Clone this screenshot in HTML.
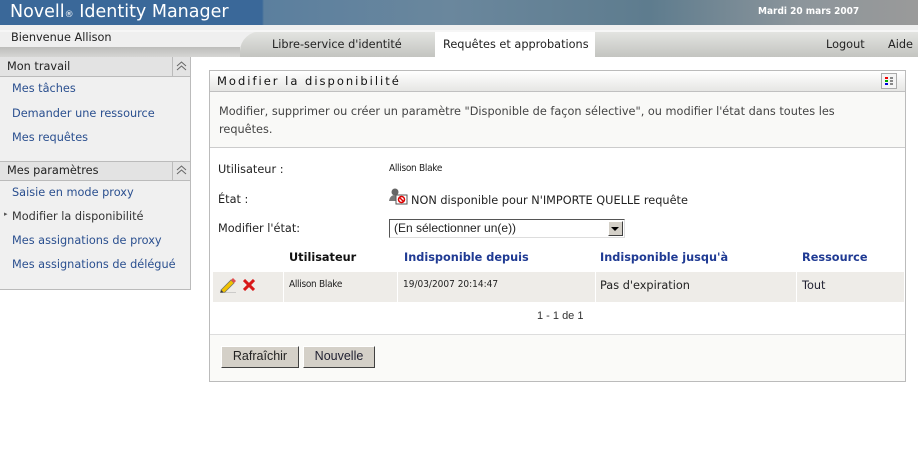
<!DOCTYPE html>
<html><head><meta charset="utf-8">
<style>
*{margin:0;padding:0;box-sizing:border-box}
body{width:918px;height:461px;background:#fff;font-family:"DejaVu Sans","Liberation Sans",sans-serif;font-size:11.3px;color:#222;position:relative;overflow:hidden}
.a{position:absolute;white-space:nowrap}
a{color:#2a4f8f;text-decoration:none}
.hd{color:#1f3a93;font-weight:bold;font-size:11.3px}
</style></head><body>
<div class="a" style="left:0;top:0;width:918px;height:25px;background:linear-gradient(90deg,#3a6899 0,#3a6899 262px,#5b7f9e 264px,#6a879d 450px,#5e7c8e 650px,#8c959b 800px,#9a9a9a 918px)"></div>
<div class="a" style="left:10px;top:2px;font-size:17.5px;color:#fff">Novell<span style="font-size:9px">®</span> Identity Manager</div>
<div class="a" style="left:758px;top:6px;font-size:10px;color:#fff;font-weight:bold;font-family:'DejaVu Sans Condensed','DejaVu Sans',sans-serif">Mardi 20 mars 2007</div>
<div class="a" style="left:0;top:25px;width:918px;height:32px;background:#efefef"></div>
<div class="a" style="left:0;top:47px;width:240px;height:10px;background:linear-gradient(#bdbdbb,#d6d6d4)"></div>
<div class="a" style="left:240px;top:31px;width:678px;height:26px;background:linear-gradient(#e4e5e2,#c3c4c0);border-top-left-radius:22px 20px"></div>
<div class="a" style="left:0;top:30px;width:918px;height:2px;background:#f6f6f6"></div>
<div class="a" style="left:11px;top:31px">Bienvenue Allison</div>
<div class="a" style="left:272px;top:38px">Libre-service d'identité</div>
<div class="a" style="left:435px;top:32px;width:160px;height:25px;background:#fff"></div>
<div class="a" style="left:443px;top:38px">Requêtes et approbations</div>
<div class="a" style="left:826px;top:38px">Logout</div>
<div class="a" style="left:888px;top:38px">Aide</div>
<div class="a" style="left:0;top:57px;width:191px;height:233px;background:#f0f0f0;border:1px solid #bbb;border-left:none"></div>
<div class="a" style="left:0;top:57px;width:190px;height:20px;background:#e3e3e3;border-bottom:1px solid #bbb"></div>
<div class="a" style="left:172px;top:57px;width:1px;height:20px;background:#bbb"></div>
<svg class="a" style="left:176px;top:61px" width="11" height="11" viewBox="0 0 11 11"><path d="M1 5L5.5 1L10 5M1 9L5.5 5L10 9" fill="none" stroke="#666"/></svg>
<div class="a" style="left:7px;top:60px">Mon travail</div>
<div class="a" style="left:12px;top:82px"><a>Mes tâches</a></div>
<div class="a" style="left:12px;top:107px"><a>Demander une ressource</a></div>
<div class="a" style="left:12px;top:131px"><a>Mes requêtes</a></div>
<div class="a" style="left:0;top:161px;width:190px;height:20px;background:#e3e3e3;border-top:1px solid #bbb;border-bottom:1px solid #bbb"></div>
<div class="a" style="left:172px;top:161px;width:1px;height:20px;background:#bbb"></div>
<svg class="a" style="left:176px;top:165px" width="11" height="11" viewBox="0 0 11 11"><path d="M1 5L5.5 1L10 5M1 9L5.5 5L10 9" fill="none" stroke="#666"/></svg>
<div class="a" style="left:7px;top:164px">Mes paramètres</div>
<div class="a" style="left:12px;top:186px"><a>Saisie en mode proxy</a></div>
<div class="a" style="left:4px;top:210px;font-size:7px;color:#555">▸</div>
<div class="a" style="left:12px;top:210px;color:#333">Modifier la disponibilité</div>
<div class="a" style="left:12px;top:234px"><a>Mes assignations de proxy</a></div>
<div class="a" style="left:12px;top:258px"><a>Mes assignations de délégué</a></div>
<div class="a" style="left:209px;top:70px;width:697px;height:312px;border:1px solid #bbb;background:#fff"></div>
<div class="a" style="left:210px;top:71px;width:695px;height:21px;background:linear-gradient(#fff,#e6e6e4);border-bottom:1px solid #c0c0c0"></div>
<div class="a" style="left:217px;top:74px;font-size:11.5px;letter-spacing:2px;color:#111">Modifier la disponibilité</div>
<div class="a" style="left:881px;top:73px;width:16px;height:16px;border:1px solid #aaa;background:#f4f4f4"></div>
<div class="a" style="left:885px;top:77px;width:3px;height:2px;background:#e00"></div>
<div class="a" style="left:885px;top:80px;width:3px;height:2px;background:#0a0"></div>
<div class="a" style="left:885px;top:83px;width:3px;height:2px;background:#00d"></div>
<div class="a" style="left:890px;top:77px;width:3px;height:8px;background:repeating-linear-gradient(#888 0 2px,transparent 2px 3px)"></div>
<div class="a" style="left:210px;top:92px;width:695px;height:56px;background:#f9f9f7;border-bottom:1px solid #ccc"></div>
<div class="a" style="left:219px;top:105px;color:#444">Modifier, supprimer ou créer un paramètre "Disponible de façon sélective", ou modifier l'état dans toutes les</div>
<div class="a" style="left:219px;top:123px;color:#444">requêtes.</div>
<div class="a" style="left:218px;top:163px">Utilisateur :</div>
<div class="a" style="left:389px;top:163px;font-size:10px;font-family:'DejaVu Sans Condensed',sans-serif;letter-spacing:-0.3px">Allison Blake</div>
<div class="a" style="left:218px;top:193px">État :</div>
<svg class="a" style="left:389px;top:188px" width="19" height="17" viewBox="0 0 19 17"><circle cx="6" cy="4" r="3.5" fill="#666"/><path d="M0 13 Q1 7 6 7 Q11 7 12 13Z" fill="#777"/><rect x="7" y="7" width="11" height="9" fill="#fff" stroke="#555"/><circle cx="12.5" cy="11.5" r="3" fill="none" stroke="#d00" stroke-width="1.5"/><line x1="10.5" y1="9.5" x2="14.5" y2="13.5" stroke="#d00" stroke-width="1.5"/></svg>
<div class="a" style="left:411px;top:194px">NON disponible pour N'IMPORTE QUELLE requête</div>
<div class="a" style="left:218px;top:222px">Modifier l'état:</div>
<div class="a" style="left:389px;top:219px;width:236px;height:19px;border:1px solid #555;border-right-color:#ddd;border-bottom-color:#ddd;background:#fff"></div>
<div class="a" style="left:394px;top:221px;font-family:'Liberation Sans',sans-serif;font-size:12px">(En sélectionner un(e))</div>
<div class="a" style="left:608px;top:221px;width:15px;height:15px;background:#d4d0c8;border:1px solid;border-color:#fff #404040 #404040 #fff"></div>
<div class="a" style="left:611px;top:227px;width:0;height:0;border-left:4px solid transparent;border-right:4px solid transparent;border-top:4px solid #000"></div>
<div class="a hd" style="left:289px;top:251px;color:#111">Utilisateur</div>
<div class="a hd" style="left:404px;top:251px">Indisponible depuis</div>
<div class="a hd" style="left:600px;top:251px">Indisponible jusqu'à</div>
<div class="a hd" style="left:802px;top:251px">Ressource</div>
<div class="a" style="left:213px;top:272px;width:691px;height:30px;background:#eeece8"></div>
<div class="a" style="left:283px;top:272px;width:1px;height:30px;background:#fff"></div>
<div class="a" style="left:397px;top:272px;width:1px;height:30px;background:#fff"></div>
<div class="a" style="left:595px;top:272px;width:1px;height:30px;background:#fff"></div>
<div class="a" style="left:796px;top:272px;width:1px;height:30px;background:#fff"></div>
<svg class="a" style="left:219px;top:277px" width="18" height="16" viewBox="0 0 18 16"><path d="M2 13 L12 3 L15 6 L5 16Z" fill="#f2c200" stroke="#776" stroke-width=".8"/><path d="M12 3 L14 1 L17 4 L15 6Z" fill="#e05050"/><path d="M2 13 L1 16 L5 16Z" fill="#333"/><line x1="1" y1="16" x2="17" y2="16" stroke="#aaa"/></svg>
<svg class="a" style="left:243px;top:279px" width="12" height="12" viewBox="0 0 12 12"><path d="M1 1L11 11M11 1L1 11" stroke="#d81818" stroke-width="3"/></svg>
<div class="a" style="left:289px;top:279px;font-size:10px;font-family:'DejaVu Sans Condensed',sans-serif;letter-spacing:-0.3px">Allison Blake</div>
<div class="a" style="left:403px;top:279px;font-size:10px;font-family:'DejaVu Sans Condensed',sans-serif">19/03/2007 20:14:47</div>
<div class="a" style="left:600px;top:279px">Pas d'expiration</div>
<div class="a" style="left:802px;top:279px;color:#223">Tout</div>
<div class="a" style="left:537px;top:310px;font-family:'Liberation Sans',sans-serif;font-size:11px;color:#333">1 - 1 de 1</div>
<div class="a" style="left:210px;top:334px;width:695px;height:47px;background:#fafaf8;border-top:1px solid #ddd"></div>
<div class="a" style="left:221px;top:346px;width:78px;height:22px;background:#d4d0c8;border:1px solid;border-color:#fff #404040 #404040 #fff;font-family:'Liberation Sans',sans-serif;font-size:12.5px;text-align:center;line-height:19px">Rafraîchir</div>
<div class="a" style="left:303px;top:346px;width:72px;height:22px;background:#d4d0c8;border:1px solid;border-color:#fff #404040 #404040 #fff;font-family:'Liberation Sans',sans-serif;font-size:12.5px;text-align:center;line-height:19px;color:#223">Nouvelle</div>
</body></html>
